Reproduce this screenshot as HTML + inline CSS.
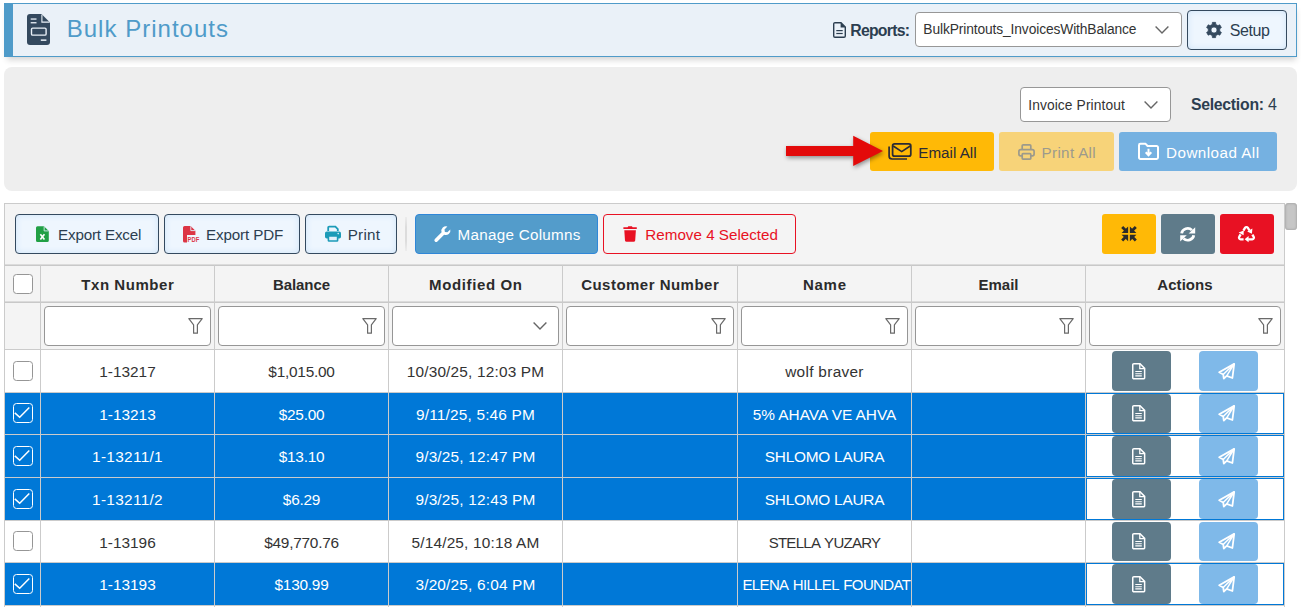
<!DOCTYPE html>
<html>
<head>
<meta charset="utf-8">
<title>Bulk Printouts</title>
<style>
*{box-sizing:border-box;margin:0;padding:0}
html,body{width:1301px;height:607px;overflow:hidden;background:#fff}
body{font-family:"Liberation Sans",sans-serif;color:#333;position:relative;font-size:15px}
.abs{position:absolute}
.t{position:absolute;white-space:nowrap;line-height:1}
svg{position:absolute;display:block;overflow:visible}
#hdr{left:4px;top:3px;width:1293px;height:54px;background:#eaf1f8;border:1px solid #4f9bc9;box-shadow:1px 5px 6px -2px rgba(0,0,0,.17)}
#hbar{left:4px;top:3px;width:8.8px;height:54px;background:#4f9bc9}
.sel{background:#fff;border:1px solid #979797;border-radius:4px}
#setupb{left:1187px;top:10px;width:100px;height:40px;border:1px solid #34495e;border-radius:4px;background:#eef6fe;box-shadow:inset 0 0 6px 0 #cde3f8}
#panel{left:4px;top:67px;width:1293px;height:123.5px;background:#eeeeee;border-radius:8px}
.btn{position:absolute;border-radius:3px}
#grid{left:4px;top:203px;width:1281px;height:420px;border:1px solid #cbcbcb;background:#f4f4f4}
.lb{position:absolute;border:1px solid #34495e;border-radius:4px;background:#eef6fe;box-shadow:inset 0 0 6px 0 #cde3f8;height:40px;top:214px}
.hl{position:absolute;background:#cbcbcb}
.hd{position:absolute;top:277.3px;font-weight:bold;font-size:15px;letter-spacing:0.25px;color:#2b2b2b;text-align:center;white-space:nowrap;line-height:1}
.fi{position:absolute;top:306px;height:40px;background:#fff;border:1px solid #969696;border-radius:4px}
.row{position:absolute;left:5px;width:1279px}
.row.s{background:#0078d7;color:#fff}
.row.u{background:#fff;color:#333}
.c{position:absolute;top:0;height:100%;text-align:center;white-space:nowrap;overflow:hidden;font-size:15.4px;line-height:1}
.c span{position:relative;display:inline-block}
.cb{position:absolute;left:8px;width:20px;height:20px;border-radius:3.5px}
.u .cb{border:1px solid #969696;background:#fff}
.s .cb{border:1.3px solid #fff;background:#0078d7}
.act{position:absolute;top:0;height:100%;background:#fff}
.s .act{border:1px solid #0078d7}
.ab{position:absolute;width:59px;border-radius:4px}
</style>
</head>
<body>
<div id="hdr" class="abs"></div><div id="hbar" class="abs"></div>
<svg style="left:27px;top:14px" width="23" height="31" viewBox="0 0 23 31">
  <path d="M3,0 H14.5 L23,8.5 V28 a3,3 0 0 1 -3,3 H3 a3,3 0 0 1 -3,-3 V3 a3,3 0 0 1 3,-3Z" fill="#34495e"/>
  <path d="M14.9,0.4 V8.1 H22.6" fill="none" stroke="#eaf1f8" stroke-width="1.1"/>
  <rect x="3.7" y="4.4" width="5.8" height="1.3" fill="#eaf1f8"/>
  <rect x="3.7" y="8.1" width="5.8" height="1.3" fill="#eaf1f8"/>
  <rect x="4.5" y="14.1" width="14.6" height="7" rx="1.2" fill="none" stroke="#eaf1f8" stroke-width="1.4"/>
  <rect x="13.8" y="25.4" width="5.6" height="1.5" fill="#eaf1f8"/>
</svg>
<div id="title" class="t" style="left:66.7px;top:17.18px;font-size:24px;font-weight:normal;color:#4f9bc9;letter-spacing:1.023px">Bulk Printouts</div>
<svg style="left:833px;top:22px" width="13" height="16" viewBox="0 0 13 16">
  <path d="M2,0.7 H8 L12.3,5 V14 a1.3,1.3 0 0 1 -1.3,1.3 H2 a1.3,1.3 0 0 1 -1.3,-1.3 V2 a1.3,1.3 0 0 1 1.3,-1.3Z" fill="none" stroke="#2c3e50" stroke-width="1.4"/>
  <path d="M7.6,0.5 V5.4 H12.4Z" fill="#2c3e50"/>
  <rect x="3.3" y="8" width="6.4" height="1.2" fill="#2c3e50"/>
  <rect x="3.3" y="10.9" width="6.4" height="1.2" fill="#2c3e50"/>
</svg>
<div id="reports" class="t" style="left:850.3px;top:22.73px;font-size:15.8px;font-weight:bold;color:#2c3e50;letter-spacing:-0.757px">Reports:</div>
<div class="abs sel" style="left:915px;top:12px;width:267px;height:35px"></div>
<div id="seltxt" class="t" style="left:923.3px;top:23.02px;font-size:13.8px;font-weight:normal;color:#333;letter-spacing:-0.119px">BulkPrintouts_InvoicesWithBalance</div>
<svg style="left:1155px;top:26px" width="14" height="8" viewBox="0 0 14 8"><path d="M0.6,0.6 L7,7 L13.4,0.6" fill="none" stroke="#666" stroke-width="1.4"/></svg>
<div id="setupb" class="abs"></div>
<svg style="left:1206.4px;top:22px" width="16" height="16" viewBox="0 0 16 16"><path fill-rule="evenodd" fill="#34495e" stroke="#34495e" stroke-width="0.7" stroke-linejoin="round" d="M6.38,0.37 L9.62,0.37 L9.82,2.39 L11.95,3.62 L13.80,2.78 L15.42,5.59 L13.77,6.77 L13.77,9.23 L15.42,10.41 L13.80,13.22 L11.95,12.38 L9.82,13.61 L9.62,15.63 L6.38,15.63 L6.18,13.61 L4.05,12.38 L2.20,13.22 L0.58,10.41 L2.23,9.23 L2.23,6.77 L0.58,5.59 L2.20,2.78 L4.05,3.62 L6.18,2.39Z M11.00,8.00 A3.0,3.0 0 1,0 5.00,8.00 A3.0,3.0 0 1,0 11.00,8.00Z"/></svg>
<div id="setup" class="t" style="left:1229.7px;top:22.56px;font-size:16px;font-weight:normal;color:#2c3e50;letter-spacing:-0.403px">Setup</div>
<div id="panel" class="abs"></div>
<div class="abs sel" style="left:1020px;top:87px;width:151px;height:34.5px"></div>
<div id="invp" class="t" style="left:1028.2px;top:98.72px;font-size:13.8px;font-weight:normal;color:#333;letter-spacing:0.106px">Invoice Printout</div>
<svg style="left:1144px;top:101px" width="14" height="8" viewBox="0 0 14 8"><path d="M0.6,0.6 L7,7 L13.4,0.6" fill="none" stroke="#666" stroke-width="1.4"/></svg>
<div id="selection" class="t" style="left:1190.9px;top:97.13px;font-size:15.8px;font-weight:bold;color:#2c3e50;letter-spacing:-0.260px">Selection:</div>
<div id="sel4" class="t" style="left:1268.1px;top:96.96px;font-size:16px;font-weight:normal;color:#2c3e50;letter-spacing:0.000px">4</div>
<div class="btn" style="left:870px;top:132px;width:124px;height:39px;background:#ffb906"></div>
<svg style="left:888px;top:143px" width="24" height="17" viewBox="0 0 24 17">
  <rect x="4.6" y="0.9" width="18.2" height="12.3" rx="2" fill="none" stroke="#2b2b35" stroke-width="1.75"/>
  <path d="M5.2,3 L13.7,8.6 L22.2,3" fill="none" stroke="#2b2b35" stroke-width="1.7"/>
  <path d="M1.1,3.4 V13 a3,3 0 0 0 3,3 H19" fill="none" stroke="#2b2b35" stroke-width="1.7"/>
</svg>
<div id="emailall" class="t" style="left:918.3px;top:144.83px;font-size:15.2px;font-weight:normal;color:#2b2b35;letter-spacing:0.006px">Email All</div>
<div class="btn" style="left:999px;top:132px;width:115px;height:39px;background:#f7d379"></div>
<svg style="left:1018px;top:144px" width="17" height="16" viewBox="0 0 17 16">
  <path d="M4.2,5.6 V1.8 a1,1 0 0 1 1,-1 H11.8 a1,1 0 0 1 1,1 V5.6" fill="none" stroke="#9c9a8c" stroke-width="1.7"/>
  <rect x="0.9" y="5.6" width="15.2" height="6.2" rx="1.8" fill="none" stroke="#9c9a8c" stroke-width="1.7"/>
  <rect x="4.2" y="9.6" width="8.6" height="5.5" rx="0.8" fill="#f7d379" stroke="#9c9a8c" stroke-width="1.7"/>
</svg>
<div id="printall" class="t" style="left:1041.6px;top:144.83px;font-size:15.2px;font-weight:normal;color:#9c9a8c;letter-spacing:0.322px">Print All</div>
<div class="btn" style="left:1119px;top:132px;width:158px;height:39px;background:#75b1e1"></div>
<svg style="left:1137.5px;top:143px" width="21" height="17" viewBox="0 0 21 17">
  <path d="M1,2.2 a1.4,1.4 0 0 1 1.4,-1.4 H7.6 L9.6,3 H18.6 a1.4,1.4 0 0 1 1.4,1.4 V14.6 a1.4,1.4 0 0 1 -1.4,1.4 H2.4 a1.4,1.4 0 0 1 -1.4,-1.4Z" fill="none" stroke="#fff" stroke-width="2" stroke-linejoin="round"/>
  <path d="M10.5,5.8 V11.4 M7.7,9.2 L10.5,12.2 L13.3,9.2" fill="none" stroke="#fff" stroke-width="2"/>
</svg>
<div id="dlall" class="t" style="left:1166.0px;top:144.83px;font-size:15.2px;font-weight:normal;color:#fff;letter-spacing:0.482px">Download All</div>
<svg style="left:780px;top:128px;filter:drop-shadow(1.5px 2.5px 2px rgba(0,0,0,.4))" width="110" height="46" viewBox="0 0 110 46">
  <path d="M6,18 H73.2 V7.8 L103,23 L73.2,38 V28 H6Z" fill="#e30a0a"/>
</svg>
<div id="grid" class="abs"></div>
<div class="lb" style="left:15px;width:144px"></div>
<svg style="left:35.7px;top:225.6px" width="12.8" height="16.2" viewBox="0 0 13.5 16.5">
 <path d="M1.6,0 H8.4 L13.5,5.1 V14.9 a1.6,1.6 0 0 1 -1.6,1.6 H1.6 a1.6,1.6 0 0 1 -1.6,-1.6 V1.6 a1.6,1.6 0 0 1 1.6,-1.6Z" fill="#21a045"/>
 <path d="M8.6,0.2 V4.9 H13.3" fill="none" stroke="#e3f0fb" stroke-width="0.9"/>
 <path d="M4.6,8.4 L8.9,14 M8.9,8.4 L4.6,14" stroke="#fff" stroke-width="1.7" fill="none"/>
</svg>
<div id="bx" class="t" style="left:58.0px;top:227.13px;font-size:15.2px;font-weight:normal;color:#2c3e50;letter-spacing:-0.164px">Export Excel</div>
<div class="lb" style="left:164px;width:135.5px"></div>
<svg style="left:182.6px;top:225.5px" width="16.5" height="16.5" viewBox="0 0 16.5 16.5">
 <path d="M1.6,0 H7.6 L12.4,4.8 V9 H4 V16.5 H1.6 a1.6,1.6 0 0 1 -1.6,-1.6 V1.6 a1.6,1.6 0 0 1 1.6,-1.6Z" fill="#dc3545"/>
 <path d="M7.8,0.2 V4.6 H12.2" fill="none" stroke="#e3f0fb" stroke-width="0.9"/>
 <text x="4.6" y="16.3" font-family="Liberation Sans, sans-serif" font-weight="bold" font-size="7" fill="#dc3545" textLength="11.6" lengthAdjust="spacingAndGlyphs">PDF</text>
</svg>
<div id="bp" class="t" style="left:206.0px;top:227.13px;font-size:15.2px;font-weight:normal;color:#2c3e50;letter-spacing:-0.130px">Export PDF</div>
<div class="lb" style="left:305px;width:92px"></div>
<svg style="left:324.6px;top:226px" width="16" height="16" viewBox="0 0 16 16">
 <path d="M3.2,5 V1.6 a1,1 0 0 1 1,-1 H10.4 L12.8,3 V5" fill="none" stroke="#1c9bb8" stroke-width="1.8"/>
 <rect x="0" y="5.4" width="16" height="7.2" rx="1.8" fill="#1c9bb8"/>
 <rect x="3.4" y="10" width="9.2" height="5" rx="0.6" fill="#e3f0fb" stroke="#1c9bb8" stroke-width="1.6"/>
 <circle cx="13.2" cy="7.6" r="0.8" fill="#e3f0fb"/>
</svg>
<div id="bpr" class="t" style="left:347.7px;top:227.13px;font-size:15.2px;font-weight:normal;color:#2c3e50;letter-spacing:0.253px">Print</div>
<div class="abs" style="left:405px;top:217px;width:2px;height:34px;background:linear-gradient(#ececec,#dcdcdc 30%,#dcdcdc 70%,#ececec)"></div>
<div class="abs" style="left:415px;top:214px;width:183px;height:40px;background:#539ccb;border:1px solid #2f87d8;border-radius:4px"></div>
<svg style="left:434px;top:226px" width="17" height="16" viewBox="0 0 17 16">
 <path d="M16.3,3.4 L13.4,6.3 L10.9,5.9 L10.5,3.4 L13.4,0.5 A4.6,4.6 0 0 0 7.6,6.2 L0.9,12.9 A1.6,1.6 0 0 0 3.4,15.4 L10.1,8.7 A4.6,4.6 0 0 0 16.3,3.4Z" fill="#fff"/>
</svg>
<div id="bm" class="t" style="left:457.5px;top:227.13px;font-size:15.2px;font-weight:normal;color:#fff;letter-spacing:0.291px">Manage Columns</div>
<div class="abs" style="left:603px;top:214px;width:193px;height:40px;background:#f4f4f4;border:1px solid #e81123;border-radius:4px"></div>
<svg style="left:622.8px;top:226px" width="14.2" height="16" viewBox="0 0 14.2 16">
 <path d="M0.4,1.2 H4.6 L5.3,0.2 H8.9 L9.6,1.2 H13.8 V2.9 H0.4Z" fill="#e81123"/>
 <path d="M1.3,4.2 H12.9 L12.2,14.4 a1.6,1.6 0 0 1 -1.6,1.4 H3.6 a1.6,1.6 0 0 1 -1.6,-1.4Z" fill="#e81123"/>
</svg>
<div id="br" class="t" style="left:645.3px;top:227.13px;font-size:15.2px;font-weight:normal;color:#e81123;letter-spacing:0.009px">Remove 4 Selected</div>
<div class="abs" style="left:1102px;top:214px;width:54px;height:40px;background:#ffb906;border-radius:3px"></div>
<div class="abs" style="left:1161px;top:214px;width:54px;height:40px;background:#5f7b8a;border-radius:3px"></div>
<div class="abs" style="left:1220px;top:214px;width:54px;height:40px;background:#e81123;border-radius:3px"></div>
<svg style="left:1121.2px;top:226.2px" width="16" height="15.6" viewBox="0 0 16 16">
 <g fill="none" stroke="#2b2b2b" stroke-width="2.9">
 <path d="M1,1 L5.4,5.4 M15,1 L10.6,5.4 M1,15 L5.4,10.6 M15,15 L10.6,10.6"/>
 </g>
 <path fill="#2b2b2b" d="M7.1,0.4 V7.1 H0.4Z M8.9,0.4 V7.1 H15.6Z M7.1,15.6 V8.9 H0.4Z M8.9,15.6 V8.9 H15.6Z"/>
</svg>
<svg style="left:1180.3px;top:226.7px" width="15.4" height="14.6" preserveAspectRatio="none" viewBox="0 0 16 16">
 <g fill="none" stroke="#fff" stroke-width="2.9">
 <path d="M1.7,7 A6.3,6.3 0 0 1 12.4,3.4"/>
 <path d="M14.3,9 A6.3,6.3 0 0 1 3.6,12.6"/>
 </g>
 <path d="M15.8,0.2 V7 H9Z" fill="#fff"/>
 <path d="M0.2,15.8 V9 H7Z" fill="#fff"/>
</svg>
<svg style="left:1238.2px;top:225.8px" width="17" height="16.2" viewBox="0 0 17 16.2">
 <g fill="none" stroke="#fff" stroke-width="2.3" stroke-linejoin="round" stroke-linecap="butt">
 <path d="M5.4,4.6 L7,1.9 a1.7,1.7 0 0 1 2.9,0 L11.4,4.4"/>
 <path d="M14.4,8.6 L15.7,10.9 a1.6,1.6 0 0 1 -1.4,2.4 H10.2"/>
 <path d="M5.6,13.3 H2.6 a1.6,1.6 0 0 1 -1.4,-2.4 L2.6,8.4"/>
 </g>
 <path d="M9.2,5.6 L14.4,2.6 L13.9,7.8Z" fill="#fff"/>
 <path d="M10.6,10 V16.2 L6.6,13.2Z" fill="#fff"/>
 <path d="M0.6,6.6 L5.8,4.6 L5.6,9.2Z" fill="#fff"/>
</svg>
<div class="abs" style="left:5px;top:264px;width:1279px;height:2px;background:linear-gradient(#dbdbdb 50%,#c8c8c8 50%)"></div>
<div class="abs" style="left:5px;top:301px;width:1279px;height:2px;background:linear-gradient(#dbdbdb 50%,#c8c8c8 50%)"></div>
<div class="hl" style="left:40px;top:265px;width:1px;height:85px"></div>
<div class="hl" style="left:214px;top:265px;width:1px;height:85px"></div>
<div class="hl" style="left:388px;top:265px;width:1px;height:85px"></div>
<div class="hl" style="left:562px;top:265px;width:1px;height:85px"></div>
<div class="hl" style="left:737px;top:265px;width:1px;height:85px"></div>
<div class="hl" style="left:911px;top:265px;width:1px;height:85px"></div>
<div class="hl" style="left:1085px;top:265px;width:1px;height:85px"></div>
<div class="abs" style="left:13px;top:274px;width:20px;height:20px;border:1px solid #969696;border-radius:3.5px;background:#fff"></div>
<div class="hd" style="left:40.8px;width:174.0px;letter-spacing:0.55px">Txn Number</div>
<div class="fi" style="left:44px;width:167px"></div>
<svg style="left:188.3px;top:318px" width="15" height="16" viewBox="0 0 15 16"><path d="M0.8,0.7 H14.2 L9.4,6.9 V15.2 H5.6 V6.9Z" fill="none" stroke="#6a6a6a" stroke-width="1.2" stroke-linejoin="round"/></svg>
<div class="hd" style="left:214.5px;width:174.0px;letter-spacing:-0.08px">Balance</div>
<div class="fi" style="left:218px;width:167px"></div>
<svg style="left:362.3px;top:318px" width="15" height="16" viewBox="0 0 15 16"><path d="M0.8,0.7 H14.2 L9.4,6.9 V15.2 H5.6 V6.9Z" fill="none" stroke="#6a6a6a" stroke-width="1.2" stroke-linejoin="round"/></svg>
<div class="hd" style="left:388.8px;width:174.0px;letter-spacing:0.62px">Modified On</div>
<div class="fi" style="left:392px;width:167px"></div>
<svg style="left:532.7px;top:322px" width="14" height="8" viewBox="0 0 14 8"><path d="M0.6,0.6 L7,7 L13.4,0.6" fill="none" stroke="#666" stroke-width="1.4"/></svg>
<div class="hd" style="left:562.7px;width:175.0px;letter-spacing:0.48px">Customer Number</div>
<div class="fi" style="left:566px;width:168px"></div>
<svg style="left:711.3px;top:318px" width="15" height="16" viewBox="0 0 15 16"><path d="M0.8,0.7 H14.2 L9.4,6.9 V15.2 H5.6 V6.9Z" fill="none" stroke="#6a6a6a" stroke-width="1.2" stroke-linejoin="round"/></svg>
<div class="hd" style="left:737.9px;width:174.0px;letter-spacing:0.74px">Name</div>
<div class="fi" style="left:741px;width:167px"></div>
<svg style="left:885.3px;top:318px" width="15" height="16" viewBox="0 0 15 16"><path d="M0.8,0.7 H14.2 L9.4,6.9 V15.2 H5.6 V6.9Z" fill="none" stroke="#6a6a6a" stroke-width="1.2" stroke-linejoin="round"/></svg>
<div class="hd" style="left:911.5px;width:174.0px;letter-spacing:-0.03px">Email</div>
<div class="fi" style="left:915px;width:167px"></div>
<svg style="left:1059.3px;top:318px" width="15" height="16" viewBox="0 0 15 16"><path d="M0.8,0.7 H14.2 L9.4,6.9 V15.2 H5.6 V6.9Z" fill="none" stroke="#6a6a6a" stroke-width="1.2" stroke-linejoin="round"/></svg>
<div class="hd" style="left:1085.5px;width:199.0px;letter-spacing:0.04px">Actions</div>
<div class="fi" style="left:1089px;width:192px"></div>
<svg style="left:1258.3px;top:318px" width="15" height="16" viewBox="0 0 15 16"><path d="M0.8,0.7 H14.2 L9.4,6.9 V15.2 H5.6 V6.9Z" fill="none" stroke="#6a6a6a" stroke-width="1.2" stroke-linejoin="round"/></svg>
<div class="row u" style="top:350px;height:42px">
 <div class="cb" style="top:11px"></div>
 <div class="c" style="left:36px;width:173px"><span style="top:13.76px;letter-spacing:0px">1-13217</span></div>
 <div class="c" style="left:210px;width:173px"><span style="top:13.76px;letter-spacing:-0.24px">$1,015.00</span></div>
 <div class="c" style="left:384px;width:173px"><span style="top:13.76px;letter-spacing:0.18px">10/30/25, 12:03 PM</span></div>
 <div class="c" style="left:733px;width:173px"><span style="top:13.76px;letter-spacing:0.3px">wolf braver</span></div>
 <div class="act" style="left:1081px;width:198px"></div>
</div>
<div class="row s" style="top:393px;height:41px">
 <div class="cb" style="top:10px"><svg style="left:0.3px;top:3.3px" width="16" height="11" viewBox="0 0 16 11"><path d="M0.8,5.9 L5.7,10.3 L15.3,0.5" fill="none" stroke="#fff" stroke-width="1.5"/></svg></div>
 <div class="c" style="left:36px;width:173px"><span style="top:13.76px;letter-spacing:0px">1-13213</span></div>
 <div class="c" style="left:210px;width:173px"><span style="top:13.76px;letter-spacing:-0.24px">$25.00</span></div>
 <div class="c" style="left:384px;width:173px"><span style="top:13.76px;letter-spacing:0.18px">9/11/25, 5:46 PM</span></div>
 <div class="c" style="left:733px;width:173px"><span style="top:13.76px;letter-spacing:0.0px">5% AHAVA VE AHVA</span></div>
 <div class="act" style="left:1081px;width:198px"></div>
</div>
<div class="row s" style="top:435px;height:42px">
 <div class="cb" style="top:11px"><svg style="left:0.3px;top:3.3px" width="16" height="11" viewBox="0 0 16 11"><path d="M0.8,5.9 L5.7,10.3 L15.3,0.5" fill="none" stroke="#fff" stroke-width="1.5"/></svg></div>
 <div class="c" style="left:36px;width:173px"><span style="top:13.76px;letter-spacing:0.3px">1-13211/1</span></div>
 <div class="c" style="left:210px;width:173px"><span style="top:13.76px;letter-spacing:-0.24px">$13.10</span></div>
 <div class="c" style="left:384px;width:173px"><span style="top:13.76px;letter-spacing:0.18px">9/3/25, 12:47 PM</span></div>
 <div class="c" style="left:733px;width:173px"><span style="top:13.76px;letter-spacing:-0.25px">SHLOMO LAURA</span></div>
 <div class="act" style="left:1081px;width:198px"></div>
</div>
<div class="row s" style="top:478px;height:42px">
 <div class="cb" style="top:11px"><svg style="left:0.3px;top:3.3px" width="16" height="11" viewBox="0 0 16 11"><path d="M0.8,5.9 L5.7,10.3 L15.3,0.5" fill="none" stroke="#fff" stroke-width="1.5"/></svg></div>
 <div class="c" style="left:36px;width:173px"><span style="top:13.76px;letter-spacing:0.3px">1-13211/2</span></div>
 <div class="c" style="left:210px;width:173px"><span style="top:13.76px;letter-spacing:-0.24px">$6.29</span></div>
 <div class="c" style="left:384px;width:173px"><span style="top:13.76px;letter-spacing:0.18px">9/3/25, 12:43 PM</span></div>
 <div class="c" style="left:733px;width:173px"><span style="top:13.76px;letter-spacing:-0.25px">SHLOMO LAURA</span></div>
 <div class="act" style="left:1081px;width:198px"></div>
</div>
<div class="row u" style="top:521px;height:41px">
 <div class="cb" style="top:10px"></div>
 <div class="c" style="left:36px;width:173px"><span style="top:13.76px;letter-spacing:0px">1-13196</span></div>
 <div class="c" style="left:210px;width:173px"><span style="top:13.76px;letter-spacing:-0.24px">$49,770.76</span></div>
 <div class="c" style="left:384px;width:173px"><span style="top:13.76px;letter-spacing:0.18px">5/14/25, 10:18 AM</span></div>
 <div class="c" style="left:733px;width:173px"><span style="top:13.76px;letter-spacing:-0.72px;word-spacing:1.6px;font-size:15px">STELLA YUZARY</span></div>
 <div class="act" style="left:1081px;width:198px"></div>
</div>
<div class="row s" style="top:563px;height:42px">
 <div class="cb" style="top:11px"><svg style="left:0.3px;top:3.3px" width="16" height="11" viewBox="0 0 16 11"><path d="M0.8,5.9 L5.7,10.3 L15.3,0.5" fill="none" stroke="#fff" stroke-width="1.5"/></svg></div>
 <div class="c" style="left:36px;width:173px"><span style="top:13.76px;letter-spacing:0px">1-13193</span></div>
 <div class="c" style="left:210px;width:173px"><span style="top:13.76px;letter-spacing:-0.24px">$130.99</span></div>
 <div class="c" style="left:384px;width:173px"><span style="top:13.76px;letter-spacing:0.18px">3/20/25, 6:04 PM</span></div>
 <div class="c" style="left:733px;width:173px;text-align:left;padding-left:4.5px;font-size:15px"><span style="top:14.06px;letter-spacing:-0.64px;word-spacing:1.5px">ELENA HILLEL FOUNDATION</span></div>
 <div class="act" style="left:1081px;width:198px"></div>
</div>
<div class="abs" style="left:5px;top:606px;width:1279px;height:2px;background:#fff"></div>
<div class="hl" style="left:5px;top:349px;width:1279px;height:1px"></div>
<div class="hl" style="left:5px;top:392px;width:1279px;height:1px"></div>
<div class="hl" style="left:5px;top:434px;width:1279px;height:1px"></div>
<div class="hl" style="left:5px;top:477px;width:1279px;height:1px"></div>
<div class="hl" style="left:5px;top:520px;width:1279px;height:1px"></div>
<div class="hl" style="left:5px;top:562px;width:1279px;height:1px"></div>
<div class="hl" style="left:5px;top:605px;width:1279px;height:1px"></div>
<div class="hl" style="left:40px;top:350px;width:1px;height:260px"></div>
<div class="hl" style="left:214px;top:350px;width:1px;height:260px"></div>
<div class="hl" style="left:388px;top:350px;width:1px;height:260px"></div>
<div class="hl" style="left:562px;top:350px;width:1px;height:260px"></div>
<div class="hl" style="left:737px;top:350px;width:1px;height:260px"></div>
<div class="hl" style="left:911px;top:350px;width:1px;height:260px"></div>
<div class="hl" style="left:1085px;top:350px;width:1px;height:260px"></div>
<div class="ab" style="left:1112px;top:350.90px;height:40.2px;background:#5f7b8a"></div>
<div class="ab" style="left:1199px;top:350.90px;height:40.2px;background:#7fb9e9"></div>
<svg style="left:1132.3px;top:362.7px" width="13.4" height="16.6" viewBox="0 0 13.4 16.6"><path d="M1.9,0.75 H8 L12.65,5.4 V14.7 a1.15,1.15 0 0 1 -1.15,1.15 H1.9 a1.15,1.15 0 0 1 -1.15,-1.15 V1.9 a1.15,1.15 0 0 1 1.15,-1.15Z" fill="none" stroke="#fff" stroke-width="1.5"/><path d="M7.8,0.8 V5.6 H12.6" fill="none" stroke="#fff" stroke-width="1.3"/><path d="M3.3,8.5 H9.8 M3.3,10.7 H9.8 M3.3,12.9 H9.8" stroke="#fff" stroke-width="1.1" fill="none"/></svg>
<svg style="left:1218.1px;top:362.7px" width="17" height="16.6" viewBox="0 0 17 16.6"><path d="M16.2,0.9 L1.2,9.3 L5.2,11.5 L5.8,15.6 L8.7,12.9 L14.4,15Z" fill="none" stroke="#fff" stroke-width="1.8" stroke-linejoin="round"/><path d="M16.2,0.9 L5.2,11.5 M16.2,0.9 L8.7,12.9" fill="none" stroke="#fff" stroke-width="1.5"/></svg>
<div class="ab" style="left:1112px;top:394.30px;height:38.3px;background:#5f7b8a"></div>
<div class="ab" style="left:1199px;top:394.30px;height:38.3px;background:#7fb9e9"></div>
<svg style="left:1132.3px;top:405.1px" width="13.4" height="16.6" viewBox="0 0 13.4 16.6"><path d="M1.9,0.75 H8 L12.65,5.4 V14.7 a1.15,1.15 0 0 1 -1.15,1.15 H1.9 a1.15,1.15 0 0 1 -1.15,-1.15 V1.9 a1.15,1.15 0 0 1 1.15,-1.15Z" fill="none" stroke="#fff" stroke-width="1.5"/><path d="M7.8,0.8 V5.6 H12.6" fill="none" stroke="#fff" stroke-width="1.3"/><path d="M3.3,8.5 H9.8 M3.3,10.7 H9.8 M3.3,12.9 H9.8" stroke="#fff" stroke-width="1.1" fill="none"/></svg>
<svg style="left:1218.1px;top:405.1px" width="17" height="16.6" viewBox="0 0 17 16.6"><path d="M16.2,0.9 L1.2,9.3 L5.2,11.5 L5.8,15.6 L8.7,12.9 L14.4,15Z" fill="none" stroke="#fff" stroke-width="1.8" stroke-linejoin="round"/><path d="M16.2,0.9 L5.2,11.5 M16.2,0.9 L8.7,12.9" fill="none" stroke="#fff" stroke-width="1.5"/></svg>
<div class="ab" style="left:1112px;top:436.30px;height:39.3px;background:#5f7b8a"></div>
<div class="ab" style="left:1199px;top:436.30px;height:39.3px;background:#7fb9e9"></div>
<svg style="left:1132.3px;top:447.6px" width="13.4" height="16.6" viewBox="0 0 13.4 16.6"><path d="M1.9,0.75 H8 L12.65,5.4 V14.7 a1.15,1.15 0 0 1 -1.15,1.15 H1.9 a1.15,1.15 0 0 1 -1.15,-1.15 V1.9 a1.15,1.15 0 0 1 1.15,-1.15Z" fill="none" stroke="#fff" stroke-width="1.5"/><path d="M7.8,0.8 V5.6 H12.6" fill="none" stroke="#fff" stroke-width="1.3"/><path d="M3.3,8.5 H9.8 M3.3,10.7 H9.8 M3.3,12.9 H9.8" stroke="#fff" stroke-width="1.1" fill="none"/></svg>
<svg style="left:1218.1px;top:447.6px" width="17" height="16.6" viewBox="0 0 17 16.6"><path d="M16.2,0.9 L1.2,9.3 L5.2,11.5 L5.8,15.6 L8.7,12.9 L14.4,15Z" fill="none" stroke="#fff" stroke-width="1.8" stroke-linejoin="round"/><path d="M16.2,0.9 L5.2,11.5 M16.2,0.9 L8.7,12.9" fill="none" stroke="#fff" stroke-width="1.5"/></svg>
<div class="ab" style="left:1112px;top:479.30px;height:39.3px;background:#5f7b8a"></div>
<div class="ab" style="left:1199px;top:479.30px;height:39.3px;background:#7fb9e9"></div>
<svg style="left:1132.3px;top:490.6px" width="13.4" height="16.6" viewBox="0 0 13.4 16.6"><path d="M1.9,0.75 H8 L12.65,5.4 V14.7 a1.15,1.15 0 0 1 -1.15,1.15 H1.9 a1.15,1.15 0 0 1 -1.15,-1.15 V1.9 a1.15,1.15 0 0 1 1.15,-1.15Z" fill="none" stroke="#fff" stroke-width="1.5"/><path d="M7.8,0.8 V5.6 H12.6" fill="none" stroke="#fff" stroke-width="1.3"/><path d="M3.3,8.5 H9.8 M3.3,10.7 H9.8 M3.3,12.9 H9.8" stroke="#fff" stroke-width="1.1" fill="none"/></svg>
<svg style="left:1218.1px;top:490.6px" width="17" height="16.6" viewBox="0 0 17 16.6"><path d="M16.2,0.9 L1.2,9.3 L5.2,11.5 L5.8,15.6 L8.7,12.9 L14.4,15Z" fill="none" stroke="#fff" stroke-width="1.8" stroke-linejoin="round"/><path d="M16.2,0.9 L5.2,11.5 M16.2,0.9 L8.7,12.9" fill="none" stroke="#fff" stroke-width="1.5"/></svg>
<div class="ab" style="left:1112px;top:521.90px;height:39.2px;background:#5f7b8a"></div>
<div class="ab" style="left:1199px;top:521.90px;height:39.2px;background:#7fb9e9"></div>
<svg style="left:1132.3px;top:533.2px" width="13.4" height="16.6" viewBox="0 0 13.4 16.6"><path d="M1.9,0.75 H8 L12.65,5.4 V14.7 a1.15,1.15 0 0 1 -1.15,1.15 H1.9 a1.15,1.15 0 0 1 -1.15,-1.15 V1.9 a1.15,1.15 0 0 1 1.15,-1.15Z" fill="none" stroke="#fff" stroke-width="1.5"/><path d="M7.8,0.8 V5.6 H12.6" fill="none" stroke="#fff" stroke-width="1.3"/><path d="M3.3,8.5 H9.8 M3.3,10.7 H9.8 M3.3,12.9 H9.8" stroke="#fff" stroke-width="1.1" fill="none"/></svg>
<svg style="left:1218.1px;top:533.2px" width="17" height="16.6" viewBox="0 0 17 16.6"><path d="M16.2,0.9 L1.2,9.3 L5.2,11.5 L5.8,15.6 L8.7,12.9 L14.4,15Z" fill="none" stroke="#fff" stroke-width="1.8" stroke-linejoin="round"/><path d="M16.2,0.9 L5.2,11.5 M16.2,0.9 L8.7,12.9" fill="none" stroke="#fff" stroke-width="1.5"/></svg>
<div class="ab" style="left:1112px;top:564.30px;height:39.3px;background:#5f7b8a"></div>
<div class="ab" style="left:1199px;top:564.30px;height:39.3px;background:#7fb9e9"></div>
<svg style="left:1132.3px;top:575.6px" width="13.4" height="16.6" viewBox="0 0 13.4 16.6"><path d="M1.9,0.75 H8 L12.65,5.4 V14.7 a1.15,1.15 0 0 1 -1.15,1.15 H1.9 a1.15,1.15 0 0 1 -1.15,-1.15 V1.9 a1.15,1.15 0 0 1 1.15,-1.15Z" fill="none" stroke="#fff" stroke-width="1.5"/><path d="M7.8,0.8 V5.6 H12.6" fill="none" stroke="#fff" stroke-width="1.3"/><path d="M3.3,8.5 H9.8 M3.3,10.7 H9.8 M3.3,12.9 H9.8" stroke="#fff" stroke-width="1.1" fill="none"/></svg>
<svg style="left:1218.1px;top:575.6px" width="17" height="16.6" viewBox="0 0 17 16.6"><path d="M16.2,0.9 L1.2,9.3 L5.2,11.5 L5.8,15.6 L8.7,12.9 L14.4,15Z" fill="none" stroke="#fff" stroke-width="1.8" stroke-linejoin="round"/><path d="M16.2,0.9 L5.2,11.5 M16.2,0.9 L8.7,12.9" fill="none" stroke="#fff" stroke-width="1.5"/></svg>
<div class="abs" style="left:1285px;top:203px;width:12px;height:27px;border-radius:3.5px;background:#c6c6c6;box-shadow:inset 0 0 2px 1px #adadad"></div>
</body>
</html>
